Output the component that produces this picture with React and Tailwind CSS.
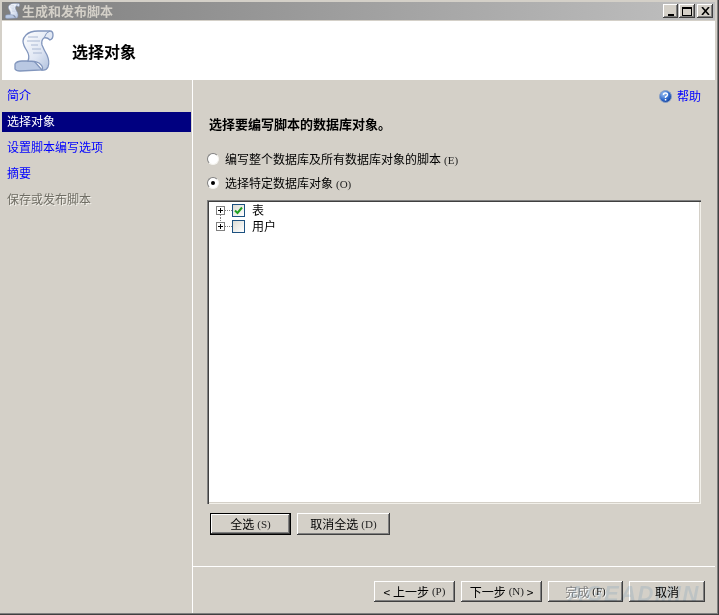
const cjk = "[font-family:'Noto_Sans_CJK_SC','Liberation_Sans',sans-serif]";

function Key({ children }) {
  return <span className="ml-[3px] [font-family:'Liberation_Serif',serif] text-[11px] text-[#222]">{children}</span>;
}

function ScrollIcon({ size, id }) {
  return (
    <svg width={size} height={size * 1.05} viewBox="0 0 40 42">
      <defs>
        <linearGradient id={id} x1="0" y1="0" x2="1" y2="1">
          <stop offset="0" stopColor="#ffffff" />
          <stop offset="0.55" stopColor="#dfe6f3" />
          <stop offset="1" stopColor="#a9bbda" />
        </linearGradient>
      </defs>
      <path d="M1 39 L1 34 Q3 31 8 31 L20 31 L28 40 L6 41 Q2 41 1 39 Z" fill="#b9c8e2" stroke="#8296bd" strokeWidth="1.3" />
      <path
        d="M12 5 Q16 1 24 1 L36 1 Q39 1 39 5 Q39 9 36 10 Q33 7 30 8 Q27 10 28 15 Q30 20 33 25 Q36 32 34 37 Q32 41 28 40 Q30 37 25 33 Q21 31 14 31 Q16 26 13 21 Q9 15 9 11 Q9 8 12 5 Z"
        fill={`url(#${id})`}
        stroke="#8296bd"
        strokeWidth="1.3"
      />
      <path d="M14 7 H24 M13 11 H26 M17 15 H24 M18 19 H27 M19 23 H28" stroke="#aab8d3" strokeWidth="1" fill="none" />
      <path d="M36 1 Q32 2 30 8" stroke="#8296bd" fill="none" />
    </svg>
  );
}

function CaptionButton({ children, className = '' }) {
  return (
    <div className={`flex h-[14px] items-center justify-center bg-[#d4d0c8] shadow-[inset_-1px_-1px_0_#404040,inset_1px_1px_0_#ffffff,inset_-2px_-2px_0_#808080] ${className}`}>
      {children}
    </div>
  );
}

function NavItem({ label, state }) {
  const tone = {
    link: 'text-[#0000ff]',
    active: 'bg-[#000080] text-white',
    disabled: 'text-[#6f6d64] [text-shadow:1px_1px_0_#f2f0ea]',
  }[state];
  return <div className={`flex h-5 items-center pb-[2px] pl-[5px] text-xs ${tone}`}>{label}</div>;
}

function Radio({ checked, children }) {
  return (
    <div className="flex h-4 items-center">
      <div className="flex h-3 w-3 items-center justify-center rounded-full border border-t-[#808080] border-r-[#f4f3ef] border-b-[#f4f3ef] border-l-[#808080] bg-white">
        {checked && <div className="h-1 w-1 rounded-full bg-black" />}
      </div>
      <div className="ml-[6px] text-xs text-black">{children}</div>
    </div>
  );
}

function TreeRow({ label, checked, first }) {
  return (
    <div className="flex h-4 items-center">
      <svg width="16" height="16" viewBox="0 0 16 16" className="ml-[9px]" shapeRendering="crispEdges">
        <path d={first ? 'M4.5 13V16' : 'M4.5 0V3'} stroke="#808080" strokeDasharray="1 1" />
        <path d="M9 8.5H16" stroke="#808080" strokeDasharray="1 1" />
        <rect x="0.5" y="4.5" width="8" height="8" fill="#fff" stroke="#808080" />
        <path d="M2 8.5H7M4.5 6V11" stroke="#000" />
      </svg>
      <div className="flex h-[13px] w-[13px] items-center justify-center border border-[#1c5180] bg-gradient-to-br from-[#dcdcd5] to-white">
        {checked && (
          <svg width="9" height="9" viewBox="0 0 9 9">
            <path d="M1 4.5L3.5 7L8 1.5" stroke="#21a121" strokeWidth="2" fill="none" />
          </svg>
        )}
      </div>
      <span className="ml-[7px] text-xs text-black">{label}</span>
    </div>
  );
}

function Button({ children, className = '', isDefault, disabled }) {
  const edge = isDefault
    ? 'border border-black shadow-[inset_-1px_-1px_0_#404040,inset_1px_1px_0_#ffffff,inset_-2px_-2px_0_#808080]'
    : 'shadow-[inset_-1px_-1px_0_#404040,inset_1px_1px_0_#ffffff,inset_-2px_-2px_0_#808080]';
  const tone = disabled ? 'text-[#808080] [text-shadow:1px_1px_0_#ffffff]' : 'text-black';
  return (
    <button className={`flex items-center justify-center bg-[#d4d0c8] text-xs ${edge} ${tone} ${className}`}>
      {children}
    </button>
  );
}

export default function App() {
  return (
    <div className={`relative flex h-[615px] w-[719px] flex-col overflow-hidden bg-[#d4d0c8] pt-[2px] pr-[4px] pb-[2px] pl-[2px] shadow-[inset_-1px_-1px_0_#404040,inset_-2px_-2px_0_#808080] ${cjk}`}>
      {/* Title bar */}
      <div className="flex h-[18px] items-center bg-gradient-to-r from-[#808080] to-[#c0c0c0] pr-[2px] pl-[3px]">
        <ScrollIcon size={15} id="scroll-small" />
        <span className="ml-[2px] text-[13px] font-bold text-[#d4d0c8]">生成和发布脚本</span>
        <div className="ml-auto flex">
          <CaptionButton className="w-[15px]">
            <div className="mt-[7px] h-[2px] w-[6px] bg-black" />
          </CaptionButton>
          <CaptionButton className="mr-[2px] ml-px w-4">
            <div className="h-[9px] w-[10px] border border-t-2 border-black" />
          </CaptionButton>
          <CaptionButton className="w-4">
            <svg width="9" height="8" viewBox="0 0 9 8">
              <path d="M1 0L8 8M8 0L1 8" stroke="#000" strokeWidth="1.6" />
            </svg>
          </CaptionButton>
        </div>
      </div>

      {/* Header */}
      <div className="mt-px flex h-[59px] items-center bg-white pl-3">
        <ScrollIcon size={40} id="scroll-large" />
        <h1 className="ml-[18px] text-base font-bold text-black">选择对象</h1>
      </div>

      <div className="flex min-h-0 flex-1">
        {/* Steps */}
        <div className="flex w-[189px] flex-col gap-[6px] pt-[6px]">
          <NavItem label="简介" state="link" />
          <NavItem label="选择对象" state="active" />
          <NavItem label="设置脚本编写选项" state="link" />
          <NavItem label="摘要" state="link" />
          <NavItem label="保存或发布脚本" state="disabled" />
        </div>

        {/* Page */}
        <div className="ml-px flex flex-1 flex-col border-l border-white">
          <div className="flex h-[32px] items-start justify-end pt-[8px] pr-[14px]">
            <svg width="13" height="13" viewBox="0 0 13 13" className="mt-[2px]">
              <defs>
                <radialGradient id="help-fill" cx="0.35" cy="0.3" r="0.8">
                  <stop offset="0" stopColor="#9cc3f5" />
                  <stop offset="0.6" stopColor="#2d66c8" />
                  <stop offset="1" stopColor="#103a90" />
                </radialGradient>
              </defs>
              <circle cx="6.5" cy="6.5" r="6" fill="url(#help-fill)" stroke="#8aa0c4" />
              <path d="M4.5 5Q4.5 3 6.5 3Q8.5 3 8.5 4.8Q8.5 6 6.5 7V8" stroke="#fff" strokeWidth="1.4" fill="none" />
              <rect x="5.8" y="9" width="1.5" height="1.5" fill="#fff" />
            </svg>
            <a className="ml-[5px] text-xs text-[#0000ff]">帮助</a>
          </div>

          <h2 className="mt-[4px] ml-4 text-[13px] leading-[16px] font-bold text-black">选择要编写脚本的数据库对象。</h2>

          <div className="mt-[19px] ml-[14px] flex flex-col gap-2">
            <Radio>
              编写整个数据库及所有数据库对象的脚本<Key>(E)</Key>
            </Radio>
            <Radio checked>
              选择特定数据库对象<Key>(O)</Key>
            </Radio>
          </div>

          {/* Tree */}
          <div className="mt-[9px] ml-[14px] h-[304px] w-[494px] bg-white pt-[2px] shadow-[inset_1px_1px_0_#808080,inset_2px_2px_0_#404040,inset_-1px_-1px_0_#f2f0ea,inset_-2px_-2px_0_#d4d0c8]">
            <TreeRow label="表" checked first />
            <TreeRow label="用户" />
          </div>

          <div className="mt-[9px] ml-[17px] flex gap-[6px]">
            <Button isDefault className="h-[22px] w-[81px]">
              全选<Key>(S)</Key>
            </Button>
            <Button className="h-[22px] w-[93px]">
              取消全选<Key>(D)</Key>
            </Button>
          </div>

          <div className="mt-[31px] h-px bg-white" />

          <div className="mt-[14px] flex justify-end gap-[6px] pr-[10px]">
            <Button className="h-[21px] w-[81px]">
              &lt;&nbsp;上一步<Key>(P)</Key>
            </Button>
            <Button className="h-[21px] w-[81px]">
              下一步<Key>(N)</Key>&nbsp;&gt;
            </Button>
            <Button disabled className="h-[21px] w-[75px]">
              完成<Key>(F)</Key>
            </Button>
            <Button className="h-[21px] w-[76px]">取消</Button>
          </div>
        </div>
      </div>

      {/* Watermark over the buttons */}
      <div className="pointer-events-none absolute top-[577px] left-[568px] text-[22px] font-bold tracking-[1.5px] text-[#e4f0fa] italic mix-blend-multiply [font-family:'Liberation_Sans',sans-serif]">
        AGEADMIN
      </div>
    </div>
  );
}
